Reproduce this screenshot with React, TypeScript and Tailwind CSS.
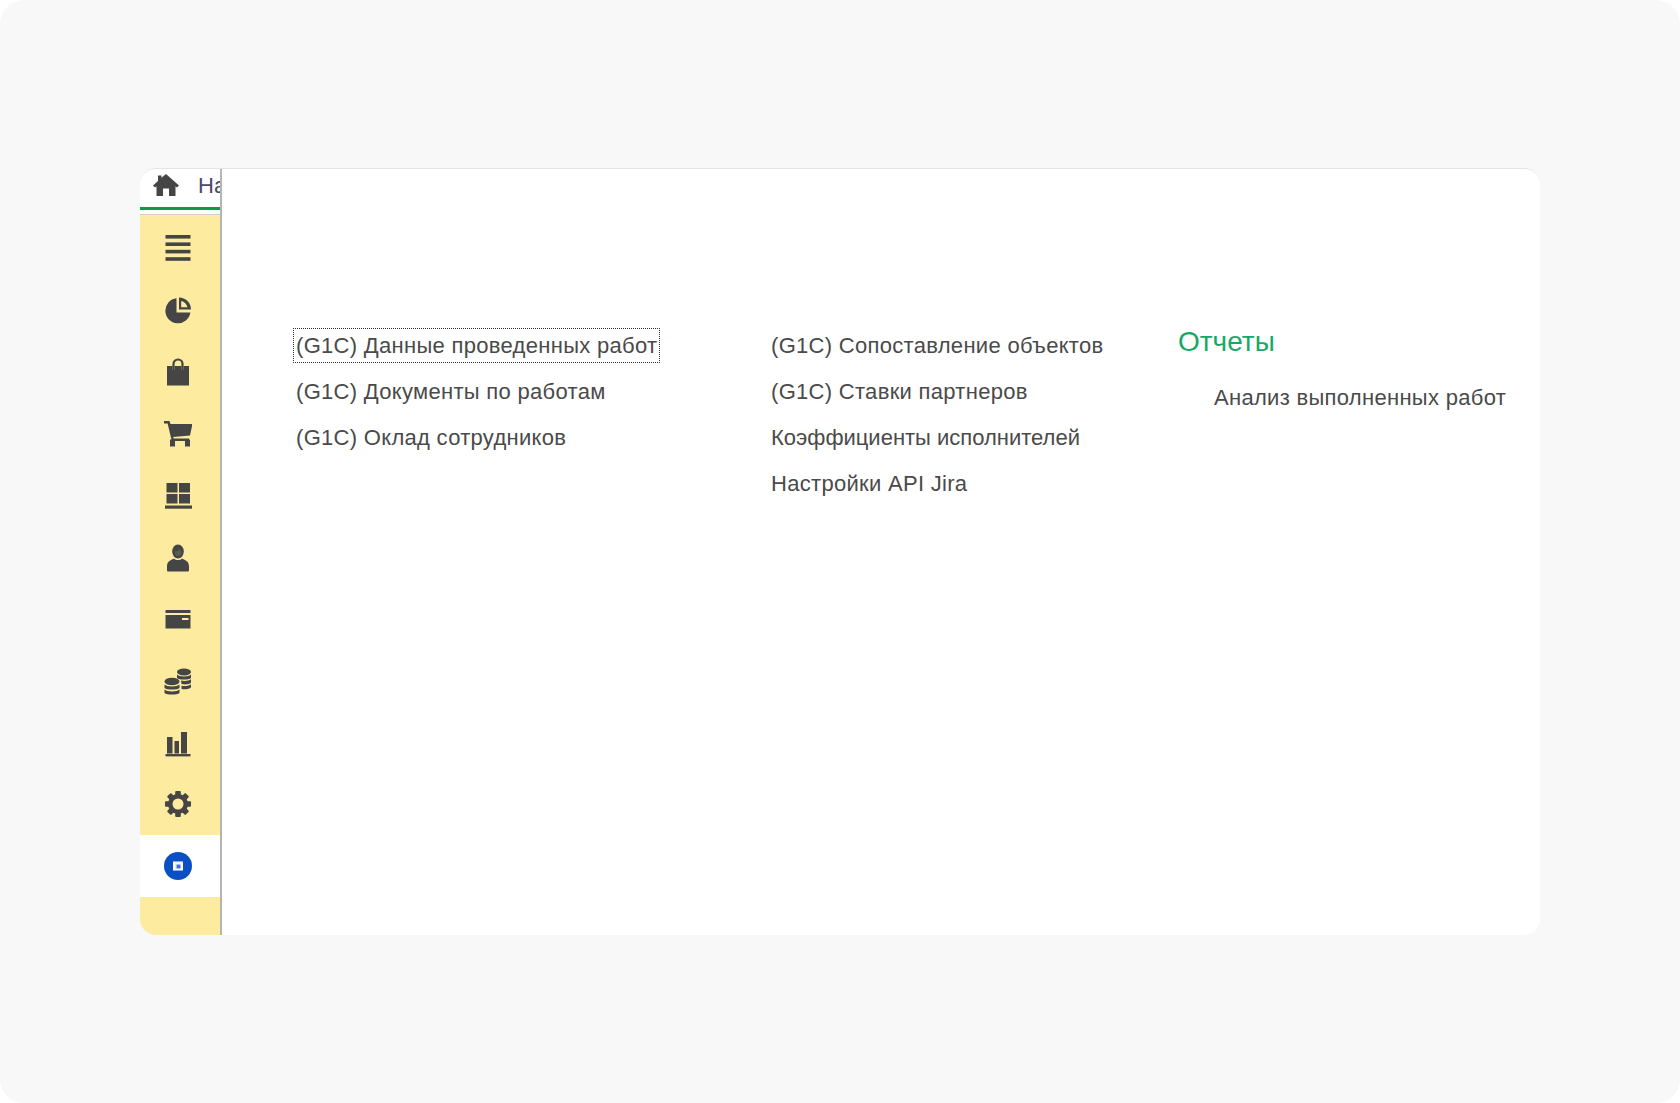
const dark = "#454545";
const yellow = "#fdeba0";

function MenuIcon() {
  return (
    <svg width="28" height="28" viewBox="0 0 28 28" fill={dark}>
      <rect x="1.5" y="1" width="25" height="3.6" />
      <rect x="1.5" y="8.4" width="25" height="3.6" />
      <rect x="1.5" y="15.8" width="25" height="3.6" />
      <rect x="1.5" y="23.2" width="25" height="3.6" />
    </svg>
  );
}

function PieIcon() {
  return (
    <svg width="28" height="28" viewBox="0 0 28 28" fill={dark}>
      <path d="M12.5 2.2A12.6 12.6 0 1 0 26.4 16.6H12.5Z" />
      <path d="M15 1.5A12 12 0 0 1 27 13.5H15Z" />
      <path d="M17.2 5A8.5 8.5 0 0 1 23.4 11.3H17.2Z" fill={yellow} />
    </svg>
  );
}

function BagIcon() {
  return (
    <svg width="28" height="28" viewBox="0 0 28 28" fill={dark}>
      <path d="M3 8H8.5V12H10.5V8H17.5V12H19.5V8H25V27.5H3Z" />
      <path d="M9.5 12V6a4.5 4.5 0 0 1 9 0V12" fill="none" stroke={dark} strokeWidth="2.2" />
    </svg>
  );
}

function CartIcon() {
  return (
    <svg width="28" height="28" viewBox="0 0 28 28" fill={dark}>
      <path d="M0 1H5.5L6.5 4H28.5L26 15.5L9.2 17L9.7 18.5H25V21H7.8L3.6 3.4H0Z" />
      <path d="M6 19.5H11V26.5H6Z" />
      <path d="M21 19.5H26V26.5H21Z" />
    </svg>
  );
}

function GridIcon() {
  return (
    <svg width="28" height="28" viewBox="0 0 28 28" fill={dark}>
      <rect x="2.5" y="1" width="11" height="9.5" />
      <rect x="15" y="1" width="11" height="9.5" />
      <rect x="2.5" y="12" width="11" height="9.5" />
      <rect x="15" y="12" width="11" height="9.5" />
      <rect x="1" y="23.5" width="27" height="3.2" />
    </svg>
  );
}

function PersonIcon() {
  return (
    <svg width="28" height="28" viewBox="0 0 28 28" fill={dark}>
      <ellipse cx="14" cy="7.5" rx="5.8" ry="7" />
      <path d="M10 14.5C6.5 16.5 3 17 3 22.5V26.5C3 27 3.5 27.5 4 27.5H24C24.5 27.5 25 27 25 26.5V22.5C25 17 21.5 16.5 18 14.5C16.5 16.5 11.5 16.5 10 14.5Z" />
      <path d="M10.5 7.5C12.5 7.5 15 6.5 16 5.5C16.5 6.5 17.5 7.5 17.7 8C17.5 10.5 16 12.2 14 12.2C12 12.2 10.7 10 10.5 7.5Z" fill="#5b5a50" />
    </svg>
  );
}

function CardIcon() {
  return (
    <svg width="28" height="28" viewBox="0 0 28 28" fill={dark}>
      <rect x="1.5" y="4" width="25" height="3" />
      <path d="M1.5 9H26.5V22.5H1.5Z" />
      <rect x="18" y="12" width="6.5" height="2" fill={yellow} />
    </svg>
  );
}

function CoinsIcon() {
  return (
    <svg width="28" height="28" viewBox="0 0 28 28" fill={dark}>
      <ellipse cx="20" cy="4" rx="7" ry="3.4" />
      <path d="M13 6.5C15 9 25 9 27 6.5V10C25 12 15 12 13 10Z" />
      <path d="M17 12.5C20 13.3 25 13 27 11.2V14.8C25.5 16.3 21 16.8 17.5 16Z" />
      <path d="M17.5 17.7C21 18.4 25 17.8 27 16.2V19.4C25.5 21 21.5 21.5 17.5 21Z" />
      <ellipse cx="8" cy="13.5" rx="7.5" ry="3.8" />
      <path d="M0.5 16.5C3 19 13 19 15.5 16.5V20C13 22 3 22 0.5 20Z" />
      <path d="M0.5 21.5C3 24 13 24 15.5 21.5V25C13 27 3 27 0.5 25Z" />
    </svg>
  );
}

function ChartIcon() {
  return (
    <svg width="28" height="28" viewBox="0 0 28 28" fill={dark}>
      <rect x="3" y="7" width="5.5" height="16.5" />
      <rect x="10.5" y="11" width="4.5" height="12.5" />
      <rect x="17" y="2" width="6" height="21.5" />
      <rect x="1.5" y="24" width="25" height="2.4" />
    </svg>
  );
}

function GearIcon() {
  const teeth = [0, 45, 90, 135, 180, 225, 270, 315];
  return (
    <svg width="28" height="28" viewBox="0 0 28 28" fill={dark}>
      {teeth.map((a) => (
        <rect key={a} x="11.2" y="1" width="5.6" height="6" rx="1" transform={`rotate(${a} 14 14)`} />
      ))}
      <circle cx="14" cy="14" r="10" />
      <circle cx="14" cy="14" r="5.5" fill={yellow} />
    </svg>
  );
}

function JiraIcon() {
  return (
    <svg width="28" height="28" viewBox="0 0 28 28">
      <circle cx="14" cy="14" r="14" fill="#0a4fc4" />
      <rect x="9" y="9.5" width="10" height="9" fill="#ffffff" />
      <path d="M11 10.5H19V11.5H12V17H11Z" fill="#e6ecf8" />
      <path d="M12.5 12.5H16.5V16.5H12.5Z" fill="#3f72d0" />
    </svg>
  );
}

const icons = [MenuIcon, PieIcon, BagIcon, CartIcon, GridIcon, PersonIcon, CardIcon, CoinsIcon, ChartIcon, GearIcon];

const col1 = ["(G1C) Данные проведенных работ", "(G1C) Документы по работам", "(G1C) Оклад сотрудников"];
const col2 = ["(G1C) Сопоставление объектов", "(G1C) Ставки партнеров", "Коэффициенты исполнителей", "Настройки API Jira"];

function LinkRow({ text, focused }: { text: string; focused?: boolean }) {
  // the long word row renders tight in the reference
  const tight = text.startsWith("Коэфф");
  return (
    <div className="h-[46px] flex items-center">
      <span
        className={`h-[35px] flex items-center px-[2px] border whitespace-nowrap ${tight ? "tracking-normal" : "tracking-[0.3px]"} ${
          focused ? "border-dotted border-[#333333]" : "border-transparent"
        }`}
      >
        {text}
      </span>
    </div>
  );
}

export default function App() {
  return (
    <div className="w-[1680px] h-[1103px] bg-white overflow-hidden" style={{ fontFamily: '"Liberation Sans", Arial, sans-serif' }}>
      <div className="h-full rounded-[24px] bg-[#f8f8f8] pt-[168px] pl-[140px]">
        <div className="w-[1400px] h-[767px] flex bg-white rounded-[16px] overflow-hidden border-t border-[#e4e4e4] text-[22px] text-[#4a4a4a]">
          <aside className="w-[80px] shrink-0 flex flex-col">
            <div className="h-[38px] flex items-center overflow-hidden pl-[13px] pb-[6px] gap-[19px] bg-white">
              <svg width="26" height="22" viewBox="0 0 26 22" fill={dark} className="shrink-0">
                <path d="M13 0L26 11.5L24 13.5L22.5 12.3V22H16V14.5H10V22H3.5V12.3L2 13.5L0 11.5L5 7V1.5H8.5V3.8Z" />
              </svg>
              <span className="whitespace-nowrap text-[#4a4a6a]">Начальная страница</span>
            </div>
            <div className="h-[3px] bg-[#0c9a48]" />
            <div className="h-[5px] bg-white border-b border-[#cfcfcf]" />
            <div className="flex-1 flex flex-col bg-[#fdeba0]">
              {icons.map((Icon, i) => (
                <div key={i} className={`h-[62px] flex items-center justify-center pr-[5px] ${i < 9 ? "pt-[3px]" : ""}`}>
                  <Icon />
                </div>
              ))}
              <div className="h-[62px] bg-white flex items-center justify-center pr-[5px]">
                <JiraIcon />
              </div>
            </div>
          </aside>
          <div className="w-[2px] bg-[#b4b4b0] shrink-0" />
          <main className="flex-1 flex pt-[153px] pl-[71px]">
            <div className="w-[475px]">
              {col1.map((t, i) => (
                <LinkRow key={t} text={t} focused={i === 0} />
              ))}
            </div>
            <div className="w-[410px]">
              {col2.map((t) => (
                <LinkRow key={t} text={t} />
              ))}
            </div>
            <div>
              <div className="h-[40px] flex items-center text-[28px] text-[#17a865]">Отчеты</div>
              <div className="mt-[12px] pl-[36px] h-[46px] flex items-center whitespace-nowrap tracking-[0.3px]">Анализ выполненных работ</div>
            </div>
          </main>
        </div>
      </div>
    </div>
  );
}
